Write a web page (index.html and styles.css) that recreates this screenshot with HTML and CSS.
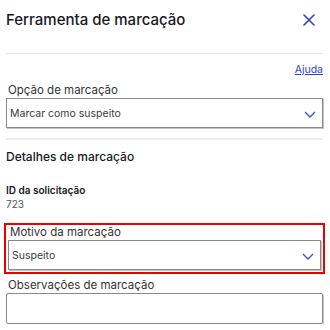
FILE: index.html
```html
<!DOCTYPE html>
<html lang="pt">
<head>
<meta charset="utf-8">
<link rel="stylesheet" href="styles.css">
</head>
<body>
<div class="panel">
  <header class="head">
    <h1 class="title">Ferramenta de marcação</h1>
    <button class="close" aria-label="Fechar">
      <svg width="12" height="12" viewBox="0 0 12 12"><path d="M1 1 L11 11 M11 1 L1 11" stroke="#2b3fd6" stroke-width="1.6" fill="none" stroke-linecap="round"/></svg>
    </button>
  </header>
  <div class="help-row"><a class="help" href="#">Ajuda</a></div>
  <div class="field">
    <label class="label">Opção de marcação</label>
    <div class="select"><span>Marcar como suspeito</span>
      <svg class="chev" width="12" height="7" viewBox="0 0 12 7"><path d="M1 1 L6 6 L11 1" stroke="#3b4fe0" stroke-width="1.3" fill="none"/></svg>
    </div>
  </div>
  <hr class="divider">
  <h2 class="section">Detalhes de marcação</h2>
  <div class="info">
    <div class="info-label">ID da solicitação</div>
    <div class="info-value">723</div>
  </div>
  <div class="field highlight">
    <label class="label">Motivo da marcação</label>
    <div class="select"><span>Suspeito</span>
      <svg class="chev" width="12" height="7" viewBox="0 0 12 7"><path d="M1 1 L6 6 L11 1" stroke="#3b4fe0" stroke-width="1.3" fill="none"/></svg>
    </div>
  </div>
  <div class="field notes">
    <label class="label">Observações de marcação</label>
    <div class="textarea"></div>
  </div>
</div>
</body>
</html>
```
FILE: styles.css
```css
html, body { margin: 0; padding: 0; background: #fff; }
body { font-family: Inter, "Noto Sans", sans-serif; color: #16191f; }
.panel { padding: 0 7px 0 6px; }
.head { display: flex; align-items: center; justify-content: space-between; height: 54px; padding-bottom: 13px; box-sizing: border-box; border-bottom: 1px solid #e6e6e6; }
.title { margin: 0; font-size: 15px; font-weight: 500; line-height: 24px; }
.close { background: none; border: 0; padding: 0; margin-right: 8px; display: flex; }
.help-row { display: flex; justify-content: flex-end; padding-top: 9px; }
.help { font-size: 10.5px; color: #2b3fd6; line-height: 14px; }
.field { display: flex; flex-direction: column; }
.label { font-size: 11.5px; color: #333; line-height: 16px; padding-left: 2px; margin-top: 5px; }
.select { height: 30px; box-sizing: border-box; border: 1px solid #8a8a8a; box-shadow: 1px 1px 0 #c4c4c4; display: flex; align-items: center; justify-content: space-between; padding: 0 6px 0 3px; font-size: 10.5px; color: #3a3a3a; }
.chev { margin-top: 2px; }
.divider { border: 0; border-top: 2px solid #ececec; margin: 10px 0 0; }
.section { margin: 8px 0 0; font-size: 12px; font-weight: 500; line-height: 18px; }
.info { margin-top: 17px; }
.info-label { font-size: 10px; font-weight: 600; line-height: 14px; }
.info-value { font-size: 10px; color: #555; line-height: 14px; }
.highlight { margin: 12px -2px 0; padding: 0 2px 2px; border: 2px solid #e00; }
.highlight .label { margin: 0 0 1px; line-height: 14px; }
.notes .label { margin: 4px 0 1px; line-height: 14px; }
.textarea { height: 31px; box-sizing: border-box; border: 1px solid #8a8a8a; border-radius: 2px; box-shadow: 1px 1px 0 #c4c4c4; }
```
